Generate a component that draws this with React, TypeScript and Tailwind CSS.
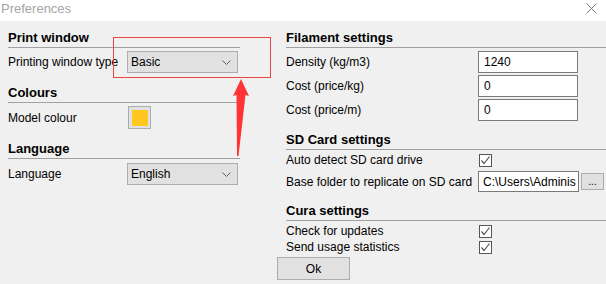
import React from "react";

const Chevron = () => (
  <svg width="9" height="5" viewBox="0 0 9 5">
    <polyline points="0.5,0.5 4.5,4.5 8.5,0.5" fill="none" stroke="#606060" strokeWidth="1" />
  </svg>
);

const Check = () => (
  <div className="w-[13px] h-[13px] border border-[#555] bg-white flex items-center justify-center">
    <svg width="11" height="11" viewBox="0 0 11 11">
      <polyline points="1.5,5.5 4,8.5 9.5,1.5" fill="none" stroke="#555" strokeWidth="1.2" />
    </svg>
  </div>
);

function Heading({ title, className = "" }: { title: string; className?: string }) {
  return (
    <div className={`h-[18px] border-b border-[#a0a0a0] font-bold text-[13px] leading-[16px] text-black ${className}`}>
      {title}
    </div>
  );
}

function Select({ value }: { value: string }) {
  return (
    <div className="w-[111px] h-[22px] border border-[#adadad] bg-[#e1e1e1] flex items-center justify-between pl-[3px] pr-[6px]">
      <span>{value}</span>
      <Chevron />
    </div>
  );
}

function InputRow({ label, value, className = "" }: { label: string; value: string; className?: string }) {
  return (
    <div className={`flex items-center h-[22px] ${className}`}>
      <span className="w-[192px]">{label}</span>
      <div className="w-[100px] h-[22px] border border-[#7a7a7a] bg-white flex items-center pl-[5px]">{value}</div>
    </div>
  );
}

function CheckRow({ label, className = "" }: { label: string; className?: string }) {
  return (
    <div className={`flex items-center h-[16px] ${className}`}>
      <span className="w-[193px]">{label}</span>
      <Check />
    </div>
  );
}

export default function App() {
  return (
    <div className="relative w-[606px] h-[284px] overflow-hidden bg-[#f0f0f0] text-[12px] text-black font-['Liberation_Sans',Arial,sans-serif]">
      {/* title bar */}
      <div className="h-[21px] bg-white flex items-start justify-between pl-[1px] pr-[9px] pt-[1px]">
        <span className="text-[13px] leading-[15px] text-[#a6a6a6]">Preferences</span>
        <svg className="mt-[2px]" width="11" height="11" viewBox="0 0 11 11">
          <path d="M0.5 0.5 L10.5 10.5 M10.5 0.5 L0.5 10.5" stroke="#777" strokeWidth="1" />
        </svg>
      </div>

      <div className="flex">
        {/* left column */}
        <div className="w-[232px] ml-[8px] pt-[9px] flex flex-col">
          <Heading title="Print window" />
          <div className="flex items-center mt-[3px]">
            <span className="w-[119px]">Printing window type</span>
            <Select value="Basic" />
          </div>

          <Heading title="Colours" className="mt-[12px]" />
          <div className="flex items-center mt-[3px] h-[23px]">
            <span className="w-[120px]">Model colour</span>
            <div className="w-[23px] h-[23px] border border-[#adadad] bg-[#e1e1e1] flex items-center justify-center">
              <div className="w-[16px] h-[16px] bg-[#ffc81e]" />
            </div>
          </div>

          <Heading title="Language" className="mt-[12px]" />
          <div className="flex items-center mt-[4px]">
            <span className="w-[119px]">Language</span>
            <Select value="English" />
          </div>
        </div>

        {/* right column */}
        <div className="flex-1 ml-[46px] pt-[9px] flex flex-col">
          <Heading title="Filament settings" />
          <InputRow label="Density (kg/m3)" value="1240" className="mt-[3px]" />
          <InputRow label="Cost (price/kg)" value="0" className="mt-[2px]" />
          <InputRow label="Cost (price/m)" value="0" className="mt-[2px]" />

          <Heading title="SD Card settings" className="mt-[11px]" />
          <CheckRow label="Auto detect SD card drive" className="mt-[2px]" />
          <div className="flex items-center h-[21px] mt-[3px]">
            <span className="w-[192px]">Base folder to replicate on SD card</span>
            <div className="w-[101px] h-[21px] border border-[#7a7a7a] bg-white flex items-center pl-[4px] overflow-hidden whitespace-nowrap">
              C:\Users\Adminis
            </div>
            <div className="ml-[2px] w-[23px] h-[17px] border border-[#adadad] bg-[#e1e1e1] flex items-center justify-center text-[10px] leading-none">
              ...
            </div>
          </div>

          <Heading title="Cura settings" className="mt-[11px]" />
          <CheckRow label="Check for updates" className="mt-[2px]" />
          <CheckRow label="Send usage statistics" />
          <div className="-ml-[9px] mt-[2px] w-[73px] h-[23px] border border-[#adadad] bg-[#e1e1e1] flex items-center justify-center">
            Ok
          </div>
        </div>
      </div>

      {/* annotation overlay */}
      <div className="absolute left-[113px] top-[37px] w-[158px] h-[41px] border border-[#e84545]" />
      <svg className="absolute left-0 top-0" width="606" height="284" viewBox="0 0 606 284">
        <polygon points="241,79 249,96 245.5,95 238.5,156 237,156 236.5,95 233,96" fill="#ff3535" />
      </svg>
    </div>
  );
}
